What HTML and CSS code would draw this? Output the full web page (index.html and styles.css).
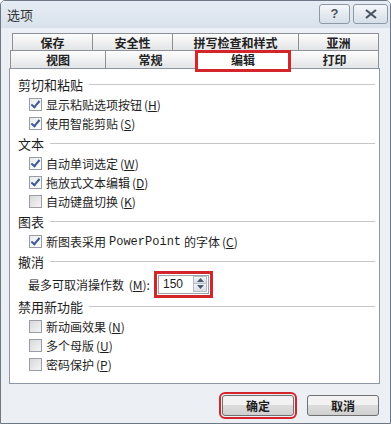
FILE: index.html
```html
<!DOCTYPE html>
<html lang="zh-CN">
<head>
  <meta charset="UTF-8" />
  <title>选项</title>
  <link rel="stylesheet" href="styles.css">
</head>
<body>
  <div class="dialog">
    <!-- Title bar -->
    <div class="titlebar">
      <span class="title">选项</span>
      <div class="tb-buttons">
        <span class="tb-btn help">?</span>
        <span class="tb-btn close">
          <svg width="14" height="10" viewBox="0 0 14 10"><path d="M2 1 L12 9 M12 1 L2 9" stroke="#4a5360" stroke-width="2.2" fill="none"/></svg>
        </span>
      </div>
    </div>

    <!-- Tabs -->
    <div class="tabs">
      <div class="tab-row top">
        <div class="tab w80">保存</div>
        <div class="tab w80">安全性</div>
        <div class="tab w126">拼写检查和样式</div>
        <div class="tab w80">亚洲</div>
      </div>
      <div class="tab-row">
        <div class="tab w95">视图</div>
        <div class="tab w90">常规</div>
        <div class="tab w95 active">编辑</div>
        <div class="tab w88">打印</div>
      </div>
    </div>

    <div class="panel">
      <div class="group-title"><span>剪切和粘贴</span></div>
      <label class="item"><span class="box checked"></span>显示粘贴选项按钮 <span class="key">(<u>H</u>)</span></label>
      <label class="item"><span class="box checked"></span>使用智能剪贴 <span class="key">(<u>S</u>)</span></label>

      <div class="group-title"><span>文本</span></div>
      <label class="item"><span class="box checked"></span>自动单词选定 <span class="key">(<u>W</u>)</span></label>
      <label class="item"><span class="box checked"></span>拖放式文本编辑 <span class="key">(<u>D</u>)</span></label>
      <label class="item"><span class="box"></span>自动键盘切换 <span class="key">(<u>K</u>)</span></label>

      <div class="group-title"><span>图表</span></div>
      <label class="item"><span class="box checked"></span>新图表采用 <span class="mono">PowerPoint</span> 的字体 <span class="key">(<u>C</u>)</span></label>

      <div class="group-title"><span>撤消</span></div>
      <div class="item spin-row">
        <span class="spin-label">最多可取消操作数 <span class="key">(<u>M</u>)</span>:</span>
        <div class="spin">
          <span class="spin-value">150</span>
          <span class="spin-arrows">
            <span class="arrow">
              <svg width="7" height="4" viewBox="0 0 7 4"><path d="M0 4 L3.5 0 L7 4 Z" fill="#4a5a70"/></svg>
            </span>
            <span class="arrow">
              <svg width="7" height="4" viewBox="0 0 7 4"><path d="M0 0 L3.5 4 L7 0 Z" fill="#4a5a70"/></svg>
            </span>
          </span>
        </div>
      </div>

      <div class="group-title"><span>禁用新功能</span></div>
      <label class="item"><span class="box"></span>新动画效果 <span class="key">(<u>N</u>)</span></label>
      <label class="item"><span class="box"></span>多个母版 <span class="key">(<u>U</u>)</span></label>
      <label class="item"><span class="box"></span>密码保护 <span class="key">(<u>P</u>)</span></label>
    </div>

    <div class="footer">
      <button class="btn marked">确定</button>
      <button class="btn">取消</button>
    </div>
  </div>
</body>
</html>
```

FILE: styles.css
```css
body {
  margin: 0;
  padding: 0;
  background: #ffffff;
  font-family: "Noto Sans CJK SC", "Liberation Sans", sans-serif;
  color: #1e1e1e;
}
.dialog {
  width: 391px;
  height: 424px;
  box-sizing: border-box;
  border: 1px solid #6d7884;
  border-radius: 5px 5px 0 0;
  background: #eceff3;
  overflow: hidden;
}

/* title bar */
.titlebar {
  height: 27px;
  display: flex;
  align-items: center;
  justify-content: space-between;
  padding: 0 2px 0 6px;
  background: linear-gradient(#e6ecf3, #d9e2ec);
}
.title {
  font-size: 13px;
  color: #333;
}
.tb-buttons {
  display: flex;
  gap: 3px;
  margin-top: -2px;
}
.tb-btn {
  height: 18px;
  border: 1px solid #8e99a6;
  border-radius: 3px;
  background: linear-gradient(#f4f7fa, #d6dee7);
  display: flex;
  align-items: center;
  justify-content: center;
  font-family: "Liberation Sans", sans-serif;
  font-size: 13px;
  font-weight: bold;
  color: #4a5360;
}
.help {
  width: 29px;
}
.close {
  width: 33px;
}

/* tabs */
.tabs {
  padding: 5px 0 0 9px;
}
.tab-row {
  display: flex;
  height: 18px;
}
.tab-row.top {
  padding-left: 2px;
  height: 17px;
}
.tab {
  box-sizing: border-box;
  border: 1px solid #8b9099;
  border-bottom: none;
  margin-right: -1px;
  background: linear-gradient(#fdfdfd, #e3e4e6);
  font-size: 12px;
  font-weight: bold;
  text-align: center;
  line-height: 17px;
  color: #222;
}
.w80 { width: 81px; }
.w126 { width: 127px; }
.w95 { width: 96px; }
.w90 { width: 91px; }
.w88 { width: 89px; }
.tab.active {
  position: relative;
  background: #ffffff;
  height: 19px;
  line-height: 18px;
  z-index: 1;
}
.tab.active::after {
  content: "";
  position: absolute;
  left: -1px;
  top: -1px;
  right: -1px;
  height: 22px;
  border: 3px solid #d4252b;
  box-sizing: border-box;
}

/* panel */
.panel {
  box-sizing: border-box;
  height: 316px;
  margin: 0 10px 0 8px;
  padding: 5px 4px 0 8px;
  background: #ffffff;
  border: 1px solid #8d97a3;
}
.group-title {
  display: flex;
  align-items: center;
  height: 21px;
  font-size: 13px;
  color: #1e1e1e;
}
.group-title::after {
  content: "";
  flex: 1;
  height: 1px;
  margin-left: 6px;
  background: #c3c6cb;
}
.item {
  display: flex;
  align-items: center;
  height: 19px;
  padding-left: 11px;
  font-size: 12px;
  color: #1e1e1e;
  white-space: nowrap;
}
.box {
  width: 11px;
  height: 11px;
  margin-right: 4px;
  border: 1px solid #9a9da3;
  background: linear-gradient(135deg, #d8d9db, #f4f4f4);
  position: relative;
}
.box.checked {
  background: linear-gradient(135deg, #e9ebee, #ffffff);
}
.box.checked::after {
  content: "";
  position: absolute;
  left: 3px;
  top: 0;
  width: 3px;
  height: 7px;
  border: solid #3d5a99;
  border-width: 0 2px 2px 0;
  transform: rotate(40deg);
}
.key {
  margin-left: 2px;
}
.mono {
  font-family: "Liberation Mono", monospace;
  font-size: 12px;
  margin: 0 3px;
}

/* spinner */
.spin-row {
  height: 24px;
  padding-left: 10px;
}
.spin-label {
  width: 130px;
  white-space: nowrap;
}
.spin {
  display: flex;
  align-items: center;
  width: 49px;
  height: 17px;
  border: 1px solid #9aa3ad;
  outline: 3px solid #d4252b;
  outline-offset: 1px;
  background: #fff;
}
.spin-value {
  flex: 1;
  padding-left: 4px;
  font-family: "Liberation Sans", sans-serif;
  font-size: 12px;
}
.spin-arrows {
  display: flex;
  flex-direction: column;
  width: 14px;
  height: 15px;
  margin-right: 1px;
}
.arrow {
  flex: 1;
  display: flex;
  align-items: center;
  justify-content: center;
  background: linear-gradient(#f3f5f8, #d9dee5);
  border: 1px solid #b6bec8;
  margin-top: -1px;
}

/* footer */
.footer {
  display: flex;
  justify-content: flex-end;
  gap: 13px;
  padding: 11px 11px 0 0;
}
.btn {
  width: 72px;
  height: 21px;
  border: 1px solid #707070;
  border-radius: 3px;
  background: linear-gradient(#f2f2f2 45%, #dcdcdc 50%, #d0d0d0);
  font-family: "Noto Sans CJK SC", sans-serif;
  font-size: 12px;
  font-weight: bold;
  color: #1e1e1e;
  padding: 0;
  line-height: 18px;
}
.btn.marked {
  outline: 2px solid #d4252b;
  outline-offset: 1px;
}
```
